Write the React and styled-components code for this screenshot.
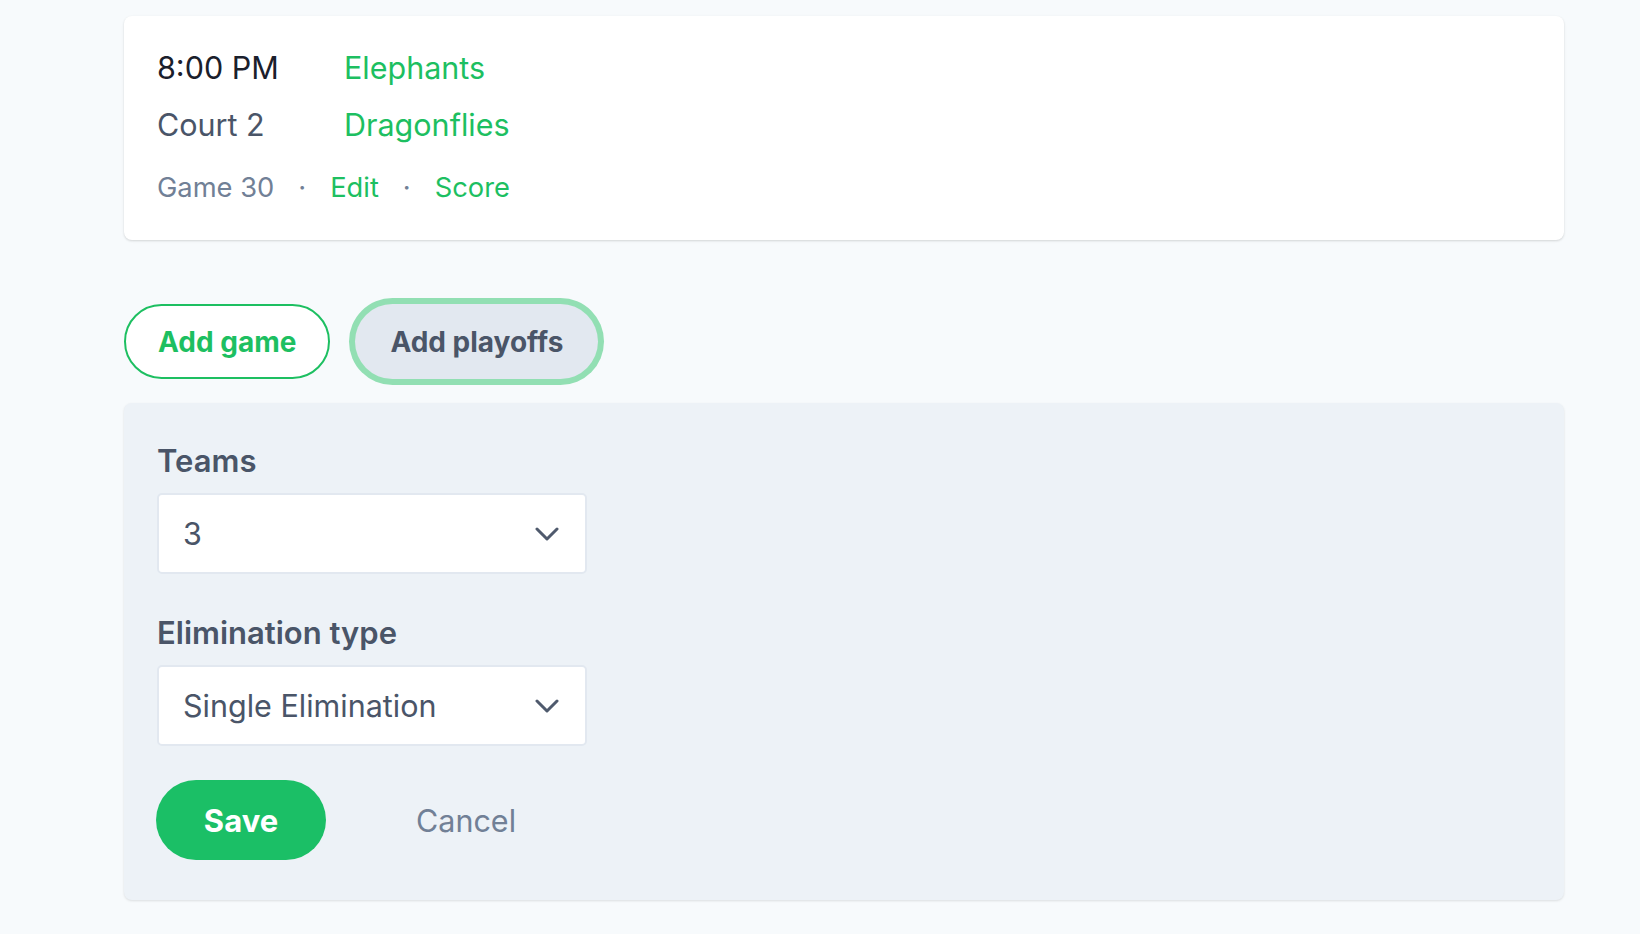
import React from "react";
import styled, { createGlobalStyle } from "styled-components";

const Global = createGlobalStyle`
  html, body { margin: 0; padding: 0; background: #f7fafc; }
  body { font-family: Inter, "Noto Sans", "Liberation Sans", sans-serif; -webkit-font-smoothing: antialiased; }
  * { box-sizing: border-box; }
`;

const Page = styled.div`
  width: 1640px;
  min-height: 934px;
  background: #f7fafc;
  padding: 16px 0 0 124px;
`;

const Column = styled.div`
  width: 1440px;
  display: flex;
  flex-direction: column;
`;

const GameCard = styled.div`
  background: #ffffff;
  border-radius: 8px;
  box-shadow: 0 1px 3px rgba(0, 0, 0, 0.1), 0 1px 2px rgba(0, 0, 0, 0.06);
  padding: 32px 33px 0 33px;
  height: 224px;
  display: flex;
  flex-direction: column;
`;

const MatchGrid = styled.div`
  display: grid;
  grid-template-columns: 187px auto;
  row-gap: 17px;
  font-size: 30.5px;
  line-height: 40px;
`;

const Cell = styled.div`
  color: ${(p) => p.$color};
`;

const MetaRow = styled.div`
  display: flex;
  align-items: center;
  gap: 24px;
  margin-top: 25px;
  font-size: 27.3px;
  line-height: 36px;
  color: #718096;
`;

const Link = styled.a`
  color: #1dbf61;
  text-decoration: none;
  cursor: pointer;
`;

const Dot = styled.span`
  color: #718096;
`;

const ButtonRow = styled.div`
  display: flex;
  align-items: center;
  gap: 25px;
  margin-top: 64px;
  margin-bottom: 24px;
`;

const PillButton = styled.button`
  height: 75px;
  padding: 0 ${(p) => (p.$variant === "outline" ? 32 : 35)}px;
  border-radius: 999px;
  font-family: inherit;
  font-size: 28px;
  font-weight: 700;
  cursor: pointer;
  border: ${(p) => (p.$variant === "outline" ? "2px solid #1dbf61" : "none")};
  background: ${(p) => (p.$variant === "outline" ? "#ffffff" : "#e2e8f0")};
  color: ${(p) => (p.$variant === "outline" ? "#1dbf61" : "#4a5568")};
  box-shadow: ${(p) => (p.$focused ? "0 0 0 6px #92dfb3" : "none")};
`;

const FormPanel = styled.div`
  background: #edf2f7;
  border-radius: 8px;
  box-shadow: 0 1px 3px rgba(0, 0, 0, 0.08), 0 1px 2px rgba(0, 0, 0, 0.04);
  padding: 35px 33px 40px 33px;
  display: flex;
  flex-direction: column;
`;

const Field = styled.div`
  display: flex;
  flex-direction: column;
  gap: 10px;
  margin-bottom: ${(p) => p.$mb}px;
`;

const Label = styled.label`
  font-size: 31px;
  line-height: 45px;
  font-weight: 600;
  color: #4a5568;
`;

const SelectBox = styled.div`
  width: 430px;
  height: 81px;
  background: #ffffff;
  border: 2px solid #e2e8f0;
  border-radius: 5px;
  display: flex;
  align-items: center;
  justify-content: space-between;
  padding: 0 26px 0 24px;
  font-size: 30.5px;
  color: #4a5568;
`;

const Actions = styled.div`
  display: flex;
  align-items: center;
  margin-left: -1px;
`;

const SaveButton = styled.button`
  width: 170px;
  height: 80px;
  border: none;
  border-radius: 999px;
  background: #1bbf66;
  color: #ffffff;
  font-family: inherit;
  font-size: 31px;
  font-weight: 700;
  cursor: pointer;
`;

const CancelButton = styled.button`
  border: none;
  background: transparent;
  color: #718096;
  font-family: inherit;
  font-size: 30.5px;
  padding: 0 0 0 90px;
  cursor: pointer;
`;

const Chevron = () => (
  <svg width="24" height="14" viewBox="0 0 24 14" fill="none">
    <polyline
      points="2,2 12,12 22,2"
      stroke="#4f5a6d"
      strokeWidth="3"
      strokeLinecap="round"
      strokeLinejoin="round"
    />
  </svg>
);

const Select = ({ value }) => (
  <SelectBox>
    <span>{value}</span>
    <Chevron />
  </SelectBox>
);

export default function App() {
  return (
    <>
      <Global />
      <Page>
        <Column>
          <GameCard>
            <MatchGrid>
              <Cell $color="#1a202c">8:00 PM</Cell>
              <Cell $color="#1dbf61">Elephants</Cell>
              <Cell $color="#4a5568">Court 2</Cell>
              <Cell $color="#1dbf61">Dragonflies</Cell>
            </MatchGrid>
            <MetaRow>
              <span>Game 30</span>
              <Dot>·</Dot>
              <Link>Edit</Link>
              <Dot>·</Dot>
              <Link>Score</Link>
            </MetaRow>
          </GameCard>

          <ButtonRow>
            <PillButton $variant="outline">Add game</PillButton>
            <PillButton $variant="soft" $focused>
              Add playoffs
            </PillButton>
          </ButtonRow>

          <FormPanel>
            <Field $mb={36}>
              <Label>Teams</Label>
              <Select value="3" />
            </Field>
            <Field $mb={34}>
              <Label>Elimination type</Label>
              <Select value="Single Elimination" />
            </Field>
            <Actions>
              <SaveButton>Save</SaveButton>
              <CancelButton>Cancel</CancelButton>
            </Actions>
          </FormPanel>
        </Column>
      </Page>
    </>
  );
}
